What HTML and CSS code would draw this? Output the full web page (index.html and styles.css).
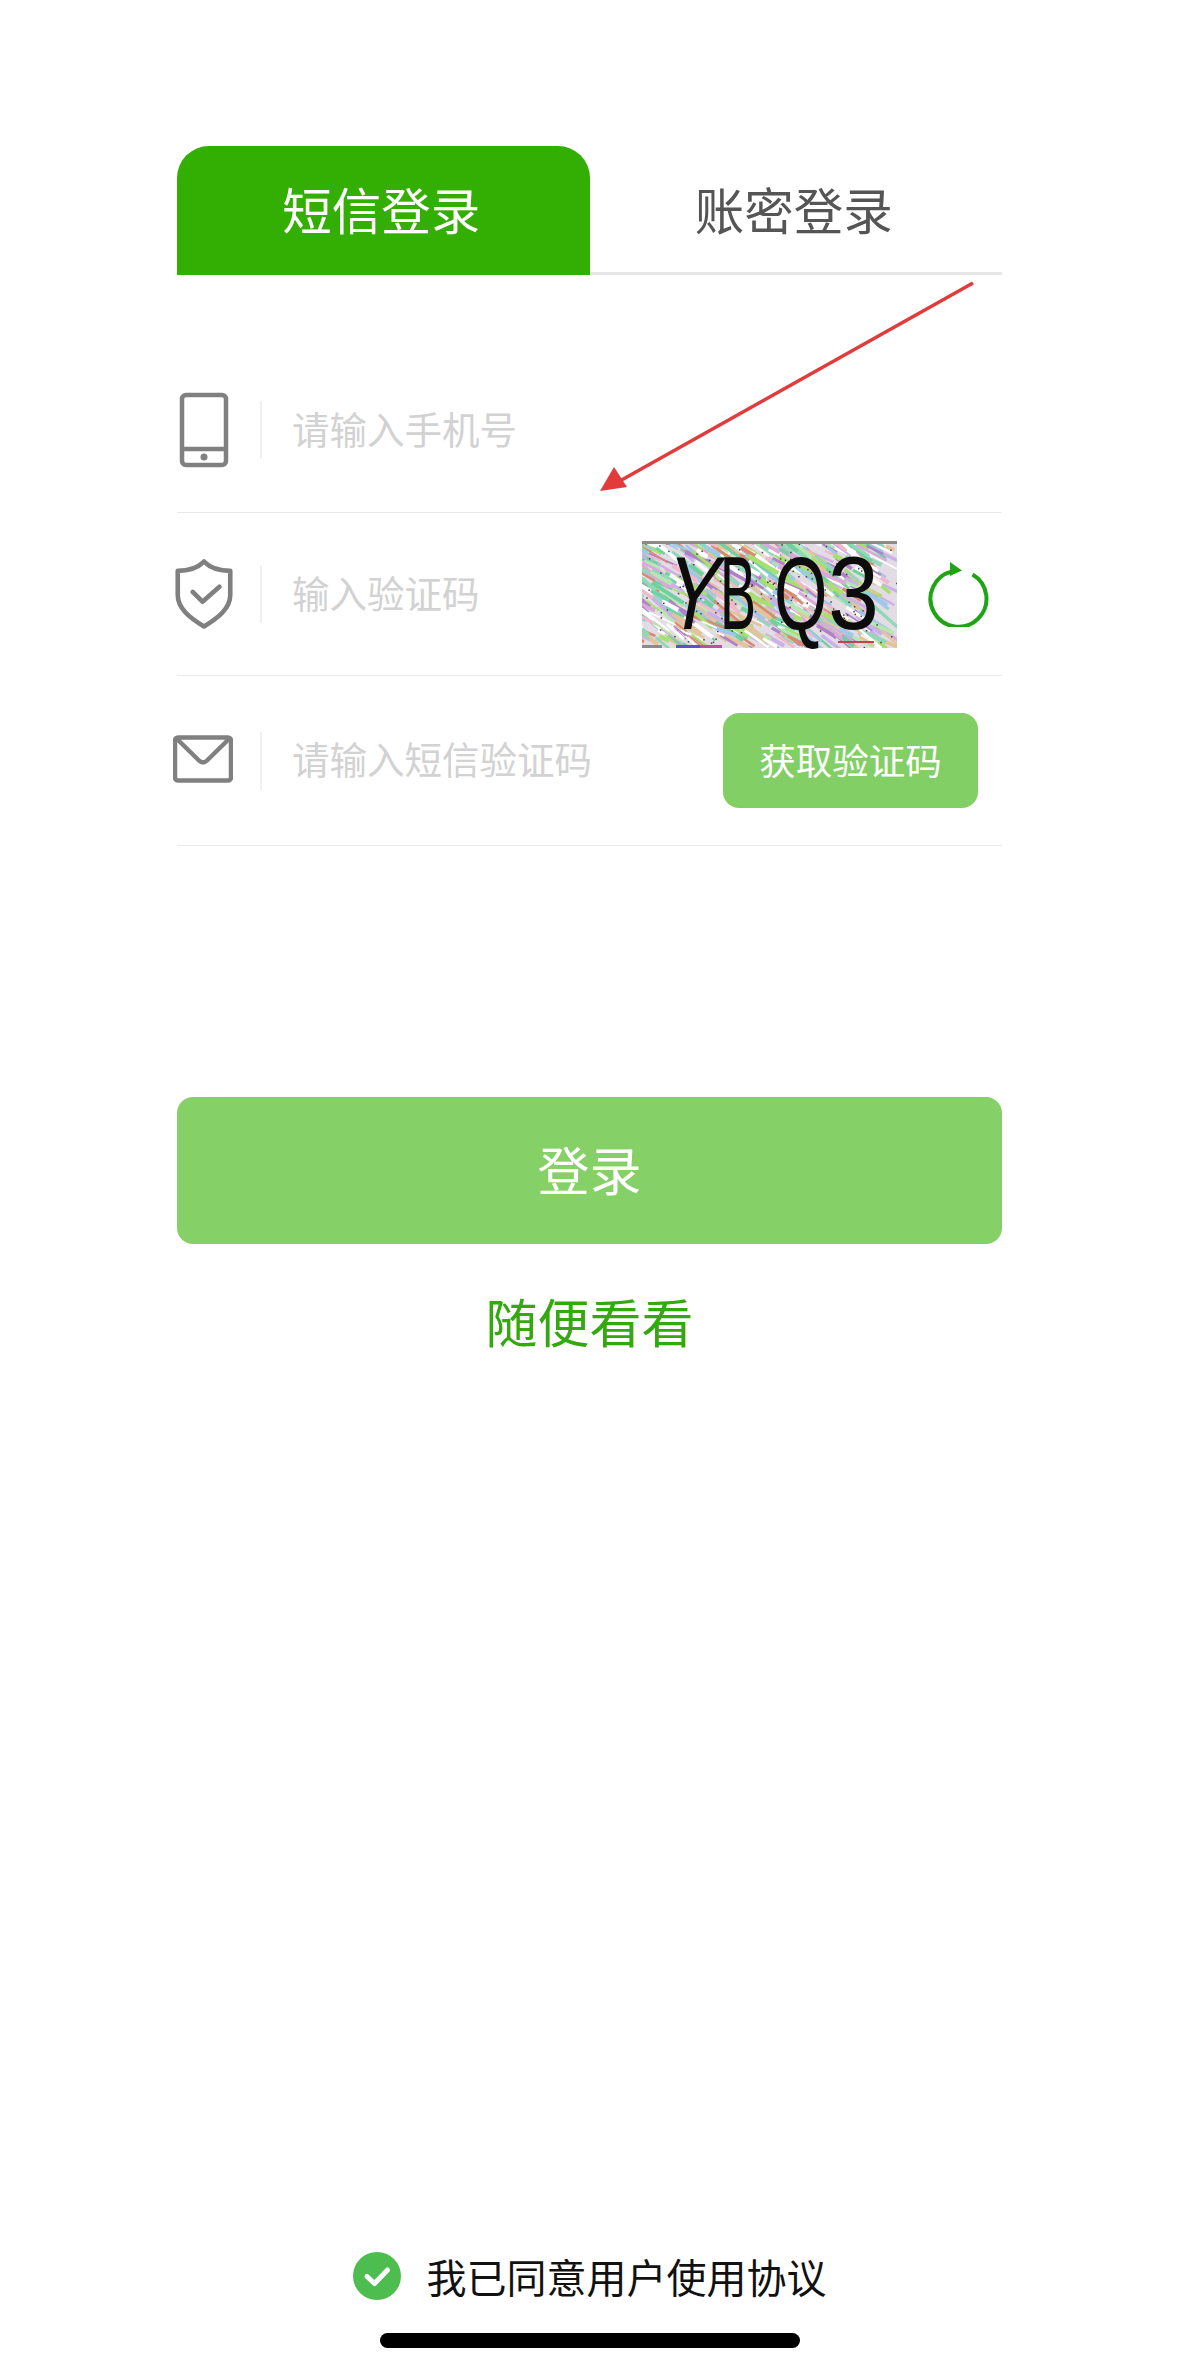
FILE: index.html
```html
<!DOCTYPE html>
<html lang="zh-CN">
<head>
    <meta charset="UTF-8">
    <meta name="viewport" content="width=device-width, initial-scale=1.0">
    <title>登录</title>
    <link rel="stylesheet" href="styles.css">
</head>
<body>
    <div class="page">
        <div class="tabs">
            <div class="tab tab-active">短信登录</div>
            <div class="tab">账密登录</div>
        </div>

        <div class="form">
            <div class="row row-phone">
                <div class="row-icon">
                    <svg width="50" height="76" viewBox="0 0 50 76" fill="none" stroke="#808080" stroke-width="4.500">
                        <rect x="3" y="3" width="44" height="70" rx="4"/>
                        <path d="M3 57h44"/>
                        <circle cx="25" cy="65" r="3.500" fill="#808080" stroke="none"/>
                    </svg>
                </div>
                <div class="row-divider"></div>
                <span class="placeholder">请输入手机号</span>
            </div>

            <div class="row row-captcha">
                <div class="row-icon">
                    <svg class="icon-shield" width="58" height="70" viewBox="0 0 56 68" fill="none" stroke="#808080" stroke-width="4.500" stroke-linejoin="round" stroke-linecap="round">
                        <path d="M28 2.500C22 8.500 13 11.500 2.500 11.500V35C2.500 48 14 57 28 65.500C42 57 53.500 48 53.500 35V11.500C43 11.500 34 8.500 28 2.500Z"/>
                        <path d="M17 32l9.500 9.500L43 27"/>
                    </svg>
                </div>
                <div class="row-divider"></div>
                <span class="placeholder">输入验证码</span>
                <div class="captcha">
                    <canvas class="captcha-noise" id="captchaNoise" width="255" height="107"></canvas>
                    <div class="captcha-letters">
                        <span class="letter-y">Y</span>
                        <span class="letter-b">B</span>
                        <span class="letter-q">Q</span>
                        <span class="letter-3">3</span>
                    </div>
                </div>
                <div class="refresh">
                    <svg width="64" height="66" viewBox="0 0 64 66" fill="none">
                        <path d="M47.500 13.500A28 28 0 1 1 27 10.500" stroke="#1ea415" stroke-width="4"/>
                        <path d="M25 1l12 8.500L25 15z" fill="#1ea415"/>
                    </svg>
                </div>
            </div>

            <div class="row row-sms">
                <div class="row-icon">
                    <svg class="icon-mail" width="60" height="48" viewBox="0 0 60 48" fill="none" stroke="#808080" stroke-width="4.500" stroke-linejoin="round">
                        <rect x="2" y="2.500" width="56" height="43" rx="3"/>
                        <path d="M4 4l22 21.500c2.500 2.400 5.500 2.400 8 0L56 4"/>
                    </svg>
                </div>
                <div class="row-divider"></div>
                <span class="placeholder">请输入短信验证码</span>
                <div class="send-code">获取验证码</div>
            </div>
        </div>

        <div class="login-btn">登录</div>
        <div class="guest-link">随便看看</div>

        <div class="footer">
            <div class="agreement">
                <svg class="agree-check" width="48" height="48" viewBox="0 0 48 48">
                    <circle cx="24" cy="24" r="24" fill="#4dbd4f"/>
                    <path d="M14 24.500l7.500 7L34.500 18" fill="none" stroke="#fff" stroke-width="5" stroke-linecap="round" stroke-linejoin="round"/>
                </svg>
                <span>我已同意用户使用协议</span>
            </div>
            <div class="home-bar"></div>
        </div>
    </div>

    <!-- red arrow drawn over the form -->
    <svg class="annotation" width="1179" height="600" viewBox="0 0 1179 600">
        <line x1="973" y1="283" x2="618" y2="482" stroke="#e23b3b" stroke-width="3.500"/>
        <polygon points="600,491 614,467 627,487" fill="#e23b3b"/>
    </svg>

    <script src="captcha.js"></script>
</body>
</html>
```

FILE: styles.css
```css
* {
    box-sizing: border-box;
}
body {
    margin: 0;
    padding: 0;
    background-color: #fff;
    font-family: "Noto Sans CJK SC", "Noto Sans", sans-serif;
}
.page {
    height: 2369px;
    padding: 146px 177px 21px 177px;
    display: flex;
    flex-direction: column;
}

/* tabs */
.tabs {
    display: flex;
    height: 129px;
    border-bottom: 3px solid #e6e6e6;
}
.tab {
    width: 50%;
    height: 129px;
    display: flex;
    align-items: center;
    justify-content: center;
    font-size: 49.500px;
    color: #555;
    padding-bottom: 5px;
    padding-right: 4px;
}
.tab-active {
    color: #fff;
    background-color: #33ae02;
    border-radius: 32px 32px 0 0;
}

/* form rows */
.form {
    margin-top: 73px;
}
.row {
    display: flex;
    align-items: center;
    border-bottom: 1px solid #e9e9e9;
}
.row-phone {
    height: 165px;
}
.row-captcha {
    height: 163px;
}
.row-sms {
    height: 170px;
}
.row-icon {
    width: 54px;
    flex-shrink: 0;
    display: flex;
    justify-content: center;
}
.icon-shield {
    flex-shrink: 0;
    margin-bottom: 1px;
}
.icon-mail {
    flex-shrink: 0;
    margin-left: -2px;
    margin-bottom: 3px;
}
.row-divider {
    width: 2px;
    height: 58px;
    margin-left: 29px;
    background-color: #f0f0f0;
}
.placeholder {
    margin-left: 30px;
    padding-bottom: 6px;
    font-size: 37.500px;
    color: #d2d2d2;
}
.captcha {
    position: relative;
    width: 255px;
    height: 107px;
    margin-left: auto;
    margin-right: 28px;
}
.captcha-noise {
    display: block;
    filter: blur(0.7px);
}
.captcha-letters {
    position: absolute;
    top: 0;
    left: 0;
    width: 100%;
    height: 100%;
    font-family: "Liberation Sans", sans-serif;
    font-size: 104px;
    line-height: 104px;
    color: #0c0c0c;
}
.captcha-letters span {
    position: absolute;
    top: 0;
    transform-origin: left center;
}
.letter-y {
    left: 26px;
    transform: scaleX(0.76) skewX(-14deg);
}
.letter-b {
    left: 78px;
    transform: scaleX(0.52);
}
.letter-q {
    left: 132px;
    transform: scaleX(0.66);
}
.letter-3 {
    left: 186px;
    transform: scaleX(0.88);
}
.refresh {
    width: 64px;
    display: flex;
    justify-content: center;
    margin-right: 13px;
}
.send-code {
    width: 255px;
    height: 95px;
    margin-left: auto;
    margin-right: 24px;
    display: flex;
    align-items: center;
    justify-content: center;
    font-size: 36.500px;
    color: #fff;
    background-color: #82cf66;
    border-radius: 16px;
    padding-bottom: 3px;
}

/* buttons */
.login-btn {
    height: 147px;
    margin-top: 251px;
    display: flex;
    align-items: center;
    justify-content: center;
    font-size: 52px;
    color: #fff;
    background-color: #85d067;
    border-radius: 16px;
    padding-bottom: 4px;
}
.guest-link {
    margin-top: 42px;
    text-align: center;
    font-size: 52px;
    line-height: 70px;
    color: #33a80f;
}

/* bottom */
.footer {
    margin-top: auto;
    display: flex;
    flex-direction: column;
    align-items: center;
}
.agreement {
    display: flex;
    align-items: center;
    gap: 26px;
    font-size: 40px;
    line-height: 50px;
    color: #111;
}
.agree-check {
    display: block;
}
.home-bar {
    width: 420px;
    height: 15px;
    margin-top: 32px;
    border-radius: 8px;
    background-color: #000;
}
.annotation {
    position: absolute;
    top: 0;
    left: 0;
    pointer-events: none;
}
```

FILE: captcha.js
```js
// noise behind the captcha letters, seeded so it stays the same on every load
let seed = 1905;
function rand() {
    seed = (seed * 16807) % 2147483647;
    return seed / 2147483647;
}

const canvas = document.getElementById('captchaNoise');
const ctx = canvas.getContext('2d');
const colors = ['#b8e6b0', '#d9a9d8', '#8fd8b8', '#c9b0e8', '#e3c49a', '#f0b8c8', '#9fc8e8', '#a8e070', '#b080c8', '#d88a70', '#ffffff', '#ffffff', '#6fd0a0'];

ctx.fillStyle = '#e4dce4';
ctx.fillRect(0, 0, canvas.width, canvas.height);

// diagonal streaks
for (let i = 0; i < 620; i++) {
    const x = rand() * canvas.width - 20;
    const y = rand() * canvas.height - 10;
    const len = 8 + rand() * 24;
    ctx.strokeStyle = colors[Math.floor(rand() * colors.length)];
    ctx.lineWidth = 1.5 + rand() * 3;
    ctx.beginPath();
    ctx.moveTo(x, y);
    ctx.lineTo(x + len, y + len * (0.4 + rand() * 0.5));
    ctx.stroke();
}

// dark specks
ctx.fillStyle = '#444';
for (let i = 0; i < 130; i++) {
    ctx.fillRect(rand() * canvas.width, rand() * canvas.height, 1.5, 1.5);
}

// edges of the image
ctx.fillStyle = '#8f8a86';
ctx.fillRect(0, 0, canvas.width, 3);
ctx.fillRect(0, 104, 20, 3);
ctx.fillStyle = '#5a52c8';
ctx.fillRect(34, 104, 24, 3);
ctx.fillStyle = '#c04ab0';
ctx.fillRect(58, 104, 22, 3);
ctx.fillStyle = '#c84050';
ctx.fillRect(196, 100, 36, 2);
```
